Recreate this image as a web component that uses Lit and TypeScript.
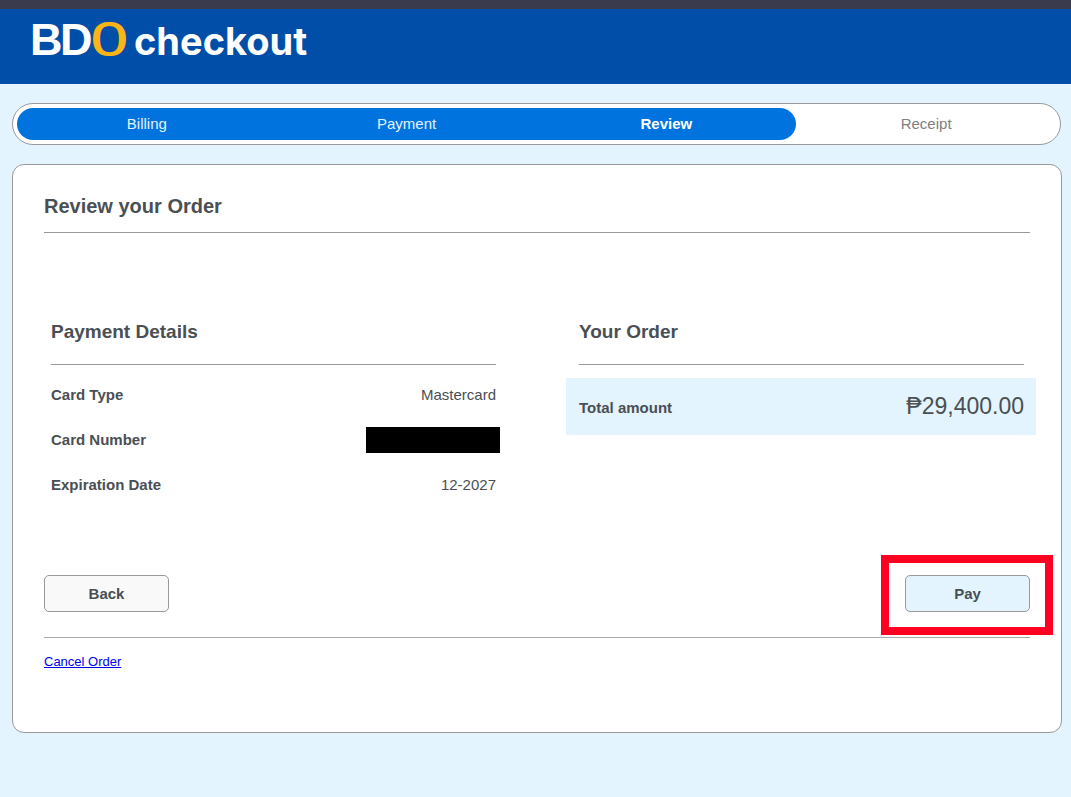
import { LitElement, html, css, nothing } from "lit";
import { customElement, state } from "lit/decorators.js";
import { classMap } from "lit/directives/class-map.js";

type Detail = { label: string; value?: string };

@customElement("app-root")
export class AppRoot extends LitElement {
  static styles = css`
    :host {
      display: block;
      min-height: 100vh;
      background: #e3f4ff;
      color: #4a4f54;
      font-family: "Liberation Sans", Arial, sans-serif;
      font-size: 15px;
      line-height: 20px;
    }
    * {
      box-sizing: border-box;
    }
    header {
      border-top: 9px solid #3a3c4e;
      background: #004ea8;
      height: 84px;
      padding: 0 24px;
    }
    .logo {
      display: block;
    }
    .brand {
      font-family: "Liberation Sans", Arial, sans-serif;
      font-size: 45px;
      font-weight: 700;
      fill: #fff;
    }
    .gold {
      font-family: "Liberation Serif", serif;
      font-size: 48px;
      font-weight: 400;
      fill: #fdb515;
      stroke: #fdb515;
      stroke-width: 2px;
    }
    .word {
      font-family: Inter, sans-serif;
      font-size: 38px;
      font-weight: 700;
      fill: #fff;
    }
    main {
      padding: 19px 9px 64px 12px;
    }
    .steps {
      list-style: none;
      margin: 0 1px 19px 0;
      padding: 4px;
      display: grid;
      grid-template-columns: repeat(4, 1fr);
      border: 1px solid #999;
      border-radius: 21px;
      background: #fff;
    }
    .step {
      height: 32px;
      line-height: 32px;
      text-align: center;
      color: #808080;
    }
    .done {
      background: #0073de;
      color: #e3f4ff;
    }
    .step:first-child {
      border-radius: 16px 0 0 16px;
    }
    .current {
      color: #fff;
      font-weight: 700;
      border-radius: 0 16px 16px 0;
    }
    .card {
      border: 1px solid #999;
      border-radius: 12px;
      background: #fff;
      padding: 29px 31px 60px;
    }
    h1,
    h2 {
      margin: 0;
      line-height: 24px;
      border-bottom: 1px solid #999;
    }
    h1 {
      font-size: 20px;
      padding-bottom: 14px;
    }
    h2 {
      font-size: 19px;
      padding-bottom: 20px;
    }
    .columns {
      display: grid;
      grid-template-columns: 1fr 1fr;
      gap: 83px;
      padding: 87px 6px 68px 7px;
    }
    dl {
      margin: 7px 0 0;
    }
    .row {
      display: flex;
      align-items: center;
      justify-content: space-between;
      height: 45px;
    }
    dt {
      font-weight: 700;
    }
    dd {
      margin: 0;
    }
    .redacted {
      width: 134px;
      height: 26px;
      margin-right: -4px;
      background: #000;
    }
    .total {
      margin: 13px -12px 0 -13px;
      padding: 2px 12px 0 13px;
      height: 57px;
      background: #e3f4ff;
    }
    .amount {
      font-size: 23px;
      line-height: 28px;
      padding-bottom: 4px;
    }
    .actions {
      display: flex;
      justify-content: space-between;
      padding-bottom: 25px;
      border-bottom: 1px solid #aaa;
    }
    button {
      width: 125px;
      height: 37px;
      border: 1px solid #999;
      border-radius: 5px;
      padding: 0;
      background: #f9f9f9;
      color: #4a4f54;
      font: inherit;
      font-weight: 700;
    }
    .pay {
      background: #e3f4ff;
    }
    .focus-box {
      position: relative;
      display: flex;
    }
    .focus-box::after {
      content: "";
      position: absolute;
      inset: -20px -23px -23px -24px;
      border: 8px solid #ff0022;
      pointer-events: none;
    }
    .cancel {
      display: inline-block;
      margin-top: 14px;
      font-size: 13px;
      color: #0000ee;
    }
  `;

  @state() private steps = ["Billing", "Payment", "Review", "Receipt"];
  @state() private active = 2;
  @state() private details: Detail[] = [
    { label: "Card Type", value: "Mastercard" },
    { label: "Card Number" },
    { label: "Expiration Date", value: "12-2027" },
  ];

  render() {
    return html`
      <header>
        <svg class="logo" width="300" height="72" viewBox="0 0 300 72">
          <text class="brand" x="6 36" y="46">BD</text>
          <text class="gold" x="68" y="46">O</text>
          <text class="word" x="110" y="46">checkout</text>
        </svg>
      </header>
      <main>
        <ol class="steps">
          ${this.steps.map(
            (name, i) => html`<li
              class=${classMap({ step: true, done: i <= this.active, current: i === this.active })}
              aria-current=${i === this.active ? "step" : nothing}
            >
              ${name}
            </li>`
          )}
        </ol>
        <section class="card">
          <h1>Review your Order</h1>
          <div class="columns">
            <section>
              <h2>Payment Details</h2>
              <dl>
                ${this.details.map(
                  (d) => html`<div class="row">
                    <dt>${d.label}</dt>
                    <dd class=${classMap({ redacted: !d.value })}>${d.value ?? nothing}</dd>
                  </div>`
                )}
              </dl>
            </section>
            <section>
              <h2>Your Order</h2>
              <dl class="row total">
                <dt>Total amount</dt>
                <dd class="amount">₱29,400.00</dd>
              </dl>
            </section>
          </div>
          <div class="actions">
            <button type="button">Back</button>
            <div class="focus-box"><button type="button" class="pay">Pay</button></div>
          </div>
          <a class="cancel" href="#">Cancel Order</a>
        </section>
      </main>
    `;
  }
}
